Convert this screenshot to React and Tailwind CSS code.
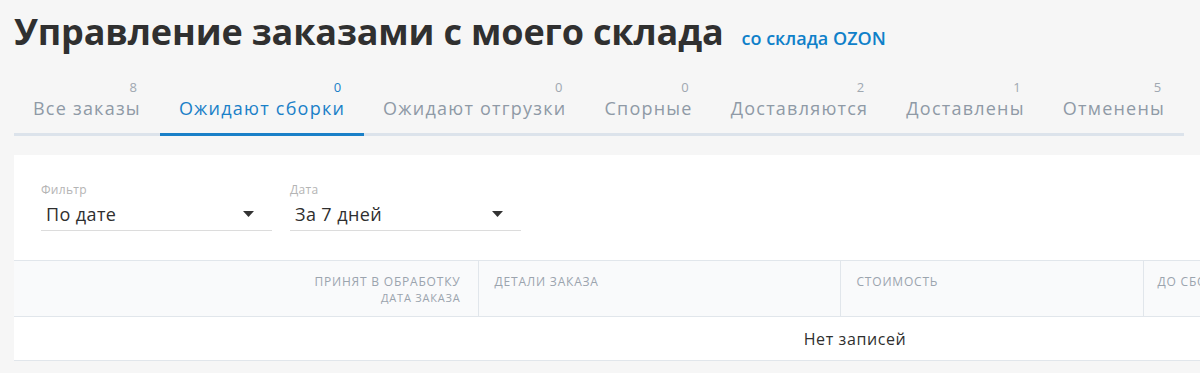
// Orders management page: tabs, filters and an empty orders table
const tabs = [
  { label: "Все заказы", count: 8 },
  { label: "Ожидают сборки", count: 0, active: true },
  { label: "Ожидают отгрузки", count: 0 },
  { label: "Спорные", count: 0 },
  { label: "Доставляются", count: 2 },
  { label: "Доставлены", count: 1 },
  { label: "Отменены", count: 5 },
];

const Caret = () => (
  <svg width="11" height="6" viewBox="0 0 11 6" className="shrink-0">
    <path d="M0 0h11L5.5 6z" fill="#333" />
  </svg>
);

const Select = ({ label, value }) => (
  <div className="w-[231px]">
    <div className="text-[12px] leading-4 tracking-[0.3px] text-[#b4b4b4]">{label}</div>
    <div className="flex items-center justify-between h-[33px] pl-[5px] pr-[18px] border-b border-[#dcdcdc]">
      <span className="text-[18px] tracking-[0.4px] text-[#2f2f2f]">{value}</span>
      <Caret />
    </div>
  </div>
);

const headCell = "pt-[12px] text-left text-[12px] leading-[17px] tracking-[0.8px] font-medium uppercase text-[#9ba4ae] border-l border-[#e1e6eb]";

export default function App() {
  return (
    <div className="min-h-screen bg-[#f6f6f6] font-['Open_Sans',sans-serif] overflow-hidden">
      {/* Header */}
      <div className="flex items-baseline gap-[18px] pl-[14px] pt-[7px]">
        <h1 className="text-[36px] leading-[49px] font-bold tracking-[-0.15px] text-[#303030]">
          Управление заказами с моего склада
        </h1>
        <a href="#" className="text-[18px] font-semibold text-[#0f80c9]">со склада OZON</a>
      </div>

      {/* Tabs */}
      <div className="flex ml-[14px] mt-[22px]">
        {tabs.map((t) => (
          <div
            key={t.label}
            className={`px-[19px] pb-[12px] border-b-[3px] ${t.active ? "border-[#1a80c8]" : "border-[#dce3eb]"}`}
          >
            <div className={`text-right text-[13px] leading-[18px] pr-[4px] ${t.active ? "text-[#1a80c8]" : "text-[#a0a8b1]"}`}>
              {t.count}
            </div>
            <div className={`text-[18px] leading-[25px] tracking-[1.23px] whitespace-nowrap ${t.active ? "text-[#1a80c8]" : "text-[#8f9aa6]"}`}>
              {t.label}
            </div>
          </div>
        ))}
      </div>

      {/* Card */}
      <div className="ml-[14px] mt-[19px] bg-white overflow-hidden">
        <div className="flex gap-[18px] pl-[27px] pt-[27px] pb-[29px]">
          <Select label="Фильтр" value="По дате" />
          <Select label="Дата" value="За 7 дней" />
        </div>

        <table className="w-[1682px] border-collapse table-fixed">
          <colgroup>
            <col className="w-[464px]" />
            <col className="w-[362px]" />
            <col className="w-[303px]" />
            <col />
          </colgroup>
          <thead>
            <tr className="bg-[#f9fafb] border-y border-[#e1e6eb] h-[56px] align-top">
              <th className="pt-[12px] pr-[17px] text-right font-medium uppercase tracking-[0.8px] text-[#9ba4ae]">
                <div className="text-[12px] leading-[17px]">Принят в обработку</div>
                <div className="text-[11px] leading-[15px]">Дата заказа</div>
              </th>
              <th className={`${headCell} pl-[16px]`}>Детали заказа</th>
              <th className={`${headCell} pl-[16px]`}>Стоимость</th>
              <th className={`${headCell} pl-[14px]`}>До сборки</th>
            </tr>
          </thead>
          <tbody>
            <tr className="border-b border-[#e1e6eb]">
              <td colSpan={4} className="h-[44px] text-center text-[16px] tracking-[0.6px] text-[#2f2f2f]">
                Нет записей
              </td>
            </tr>
          </tbody>
        </table>
      </div>
    </div>
  );
}
